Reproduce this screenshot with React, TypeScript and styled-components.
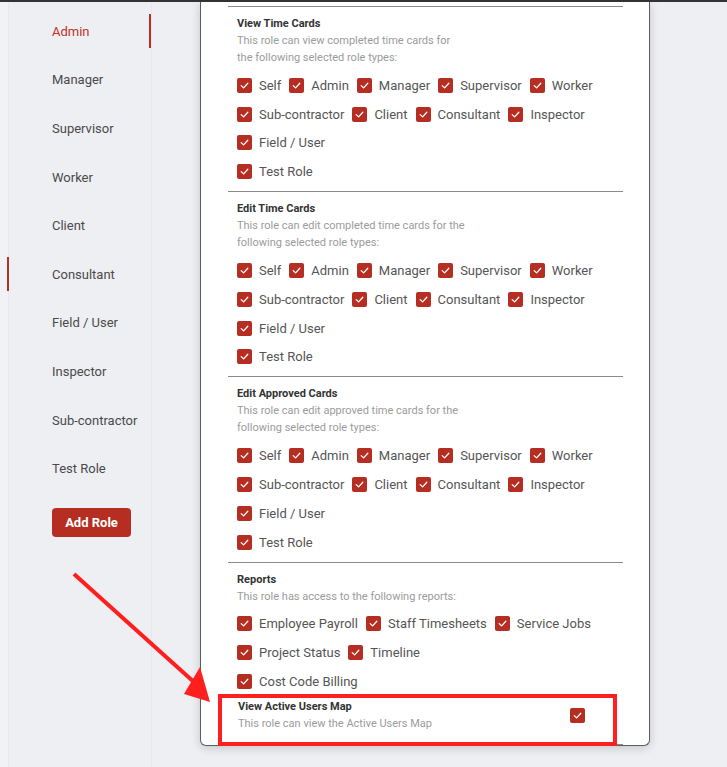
import React from 'react';
import styled, { createGlobalStyle } from 'styled-components';

const GlobalStyle = createGlobalStyle`
  html, body {
    margin: 0;
    padding: 0;
  }
  body {
    background: #eeeff3;
    border-top: 2px solid #333333;
    font-family: Roboto, 'Liberation Sans', Arial, sans-serif;
    -webkit-font-smoothing: antialiased;
  }
`;

const StyledPage = styled.div`
  position: relative;
  display: flex;
  align-items: flex-start;
  width: 727px;
  height: 765px;
  overflow: hidden;
`;

const StyledSidebar = styled.div`
  width: 152px;
  flex-shrink: 0;
  padding-left: 8px;
  box-sizing: border-box;
  background: #f1f2f5;
  align-self: stretch;
`;

const StyledNav = styled.div`
  height: 100%;
  background: #eeeff3;
  border-left: 1px solid #e7e8ec;
  border-right: 1px solid #e7e8ec;
  padding-top: 5px;
  box-sizing: border-box;
`;

const StyledNavItem = styled.div<{ $active?: boolean; $hover?: boolean }>`
  position: relative;
  height: 48.6px;
  display: flex;
  align-items: center;
  padding-left: 43px;
  font-size: 13px;
  color: ${p => (p.$active ? '#c0301f' : '#4a4a4a')};
  &::after {
    content: '';
    display: ${p => (p.$active || p.$hover ? 'block' : 'none')};
    position: absolute;
    top: 7px;
    height: 34px;
    width: 2px;
    background: #b8301f;
    ${p => (p.$active ? 'right: 0;' : 'left: -2px;')}
  }
`;

const StyledAddButton = styled.button`
  margin: 15px 0 0 43px;
  height: 29px;
  width: 79px;
  border: none;
  border-radius: 4px;
  background: #b52e21;
  color: #ffffff;
  font-family: Roboto, 'Liberation Sans', Arial, sans-serif;
  font-weight: 700;
  font-size: 13px;
  padding: 0;
`;

const StyledPanel = styled.div`
  margin-left: 48px;
  width: 450px;
  box-sizing: border-box;
  background: #ffffff;
  border: 1px solid #5c5c5c;
  border-top: none;
  border-radius: 0 0 6px 6px;
  box-shadow: 0 2px 10px rgba(0, 0, 0, 0.18);
  padding: 4px 26px 0 27px;
`;

const StyledSection = styled.div`
  border-top: 1px solid #8a8a8a;
  padding: 9px 10px 5px 9px;
`;

const StyledMapSection = styled.div`
  margin-top: -3px;
  padding: 1px 38px 12px 10px;
  display: flex;
  align-items: center;
  justify-content: space-between;
`;

const StyledTitle = styled.div`
  font-size: 11px;
  font-weight: 700;
  line-height: 16px;
  color: #333333;
`;

const StyledDescription = styled.div`
  font-size: 11px;
  line-height: 17px;
  color: #9b9b9b;
  white-space: pre-line;
`;

const StyledOptions = styled.div`
  margin-top: 5px;
`;

const StyledRow = styled.div`
  display: flex;
  align-items: center;
  gap: 8px;
  height: 28.8px;
`;

const StyledOption = styled.label`
  display: flex;
  align-items: center;
  gap: 7px;
  font-size: 13px;
  color: #555555;
  white-space: nowrap;
`;

const StyledBox = styled.span`
  width: 15px;
  height: 15px;
  border-radius: 2px;
  background: #b52e21;
  display: inline-flex;
  align-items: center;
  justify-content: center;
  flex-shrink: 0;
`;

const StyledEnd = styled.div`
  height: 1px;
  background: #8a8a8a;
`;

const StyledHighlight = styled.div`
  position: absolute;
  left: 218px;
  top: 692px;
  width: 399px;
  height: 52px;
  box-sizing: border-box;
  border: 4px solid #ff1f1f;
  pointer-events: none;
`;

const StyledArrow = styled.svg`
  position: absolute;
  left: 0;
  top: -2px;
  pointer-events: none;
`;

const Check = () => (
  <StyledBox>
    <svg width="11" height="11" viewBox="0 0 11 11">
      <path d="M2.2 5.6 L4.6 7.9 L8.8 3.3" fill="none" stroke="#ffffff" strokeWidth="1.3" strokeLinecap="round" strokeLinejoin="round" />
    </svg>
  </StyledBox>
);

const roles = ['Admin', 'Manager', 'Supervisor', 'Worker', 'Client', 'Consultant', 'Field / User', 'Inspector', 'Sub-contractor', 'Test Role'];

const roleRows = [
  ['Self', 'Admin', 'Manager', 'Supervisor', 'Worker'],
  ['Sub-contractor', 'Client', 'Consultant', 'Inspector'],
  ['Field / User'],
  ['Test Role'],
];

const reportRows = [
  ['Employee Payroll', 'Staff Timesheets', 'Service Jobs'],
  ['Project Status', 'Timeline'],
  ['Cost Code Billing'],
];

const sections = [
  { title: 'View Time Cards', text: 'This role can view completed time cards for\nthe following selected role types:', rows: roleRows },
  { title: 'Edit Time Cards', text: 'This role can edit completed time cards for the\nfollowing selected role types:', rows: roleRows },
  { title: 'Edit Approved Cards', text: 'This role can edit approved time cards for the\nfollowing selected role types:', rows: roleRows },
  { title: 'Reports', text: 'This role has access to the following reports:', rows: reportRows },
];

const App = () => {
  return (
    <StyledPage>
      <GlobalStyle />
      <StyledSidebar>
        <StyledNav>
          {roles.map(r => (
            <StyledNavItem key={r} $active={r === 'Admin'} $hover={r === 'Consultant'}>
              {r}
            </StyledNavItem>
          ))}
          <StyledAddButton>Add Role</StyledAddButton>
        </StyledNav>
      </StyledSidebar>

      <StyledPanel>
        {sections.map(s => (
          <StyledSection key={s.title}>
            <StyledTitle>{s.title}</StyledTitle>
            <StyledDescription>{s.text}</StyledDescription>
            <StyledOptions>
              {s.rows.map((row, i) => (
                <StyledRow key={i}>
                  {row.map(o => (
                    <StyledOption key={o}>
                      <Check />
                      {o}
                    </StyledOption>
                  ))}
                </StyledRow>
              ))}
            </StyledOptions>
          </StyledSection>
        ))}
        <StyledMapSection>
          <div>
            <StyledTitle>View Active Users Map</StyledTitle>
            <StyledDescription>This role can view the Active Users Map</StyledDescription>
          </div>
          <Check />
        </StyledMapSection>
        <StyledEnd />
      </StyledPanel>

      <StyledHighlight />
      <StyledArrow width="727" height="767" viewBox="0 0 727 767">
        <line x1="74" y1="574" x2="195" y2="683" stroke="#ff1f1f" strokeWidth="4" />
        <polygon points="184,694 200,667 210,702" fill="#ff1f1f" />
      </StyledArrow>
    </StyledPage>
  );
};

export default App;
